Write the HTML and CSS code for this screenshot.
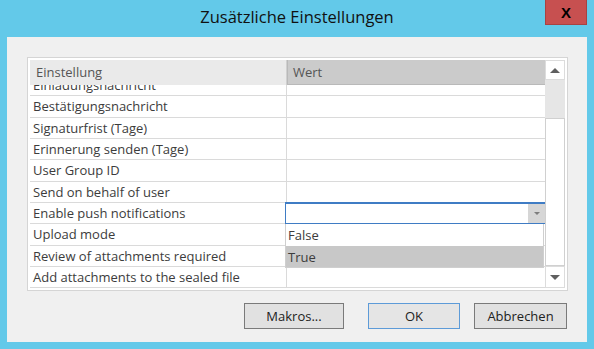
FILE: index.html
```html
<!DOCTYPE html>
<html lang="de">
<head>
<meta charset="UTF-8" />
<title>Zusätzliche Einstellungen</title>
<link rel="stylesheet" href="styles.css">
</head>
<body>

<div class="window">
  <div class="titlebar">
    <span class="title">Zusätzliche Einstellungen</span>
    <button class="close">X</button>
  </div>

  <div class="client">
    <div class="grid">
      <div class="table">
        <div class="head">
          <div class="hcell name">Einstellung</div>
          <div class="hcell value">Wert</div>
        </div>
        <div class="body">
          <div class="row first"><div class="cell name">Einladungsnachricht</div><div class="cell value"></div></div>
          <div class="row"><div class="cell name">Bestätigungsnachricht</div><div class="cell value"></div></div>
          <div class="row"><div class="cell name">Signaturfrist (Tage)</div><div class="cell value"></div></div>
          <div class="row"><div class="cell name">Erinnerung senden (Tage)</div><div class="cell value"></div></div>
          <div class="row"><div class="cell name">User Group ID</div><div class="cell value"></div></div>
          <div class="row"><div class="cell name">Send on behalf of user</div><div class="cell value"></div></div>
          <div class="row">
            <div class="cell name">Enable push notifications</div>
            <div class="cell value">
              <div class="combo"><span class="combo-arrow"></span></div>
              <ul class="dropdown">
                <li>False</li>
                <li class="selected">True</li>
              </ul>
            </div>
          </div>
          <div class="row"><div class="cell name">Upload mode</div><div class="cell value"></div></div>
          <div class="row"><div class="cell name">Review of attachments required</div><div class="cell value"></div></div>
          <div class="row"><div class="cell name">Add attachments to the sealed file</div><div class="cell value"></div></div>
          <div class="row"><div class="cell name">Sealed file name</div><div class="cell value"></div></div>
        </div>
      </div>
      <div class="scrollbar">
        <div class="sb-btn up"><span class="tri-up"></span></div>
        <div class="sb-track"></div>
        <div class="sb-thumb"></div>
        <div class="sb-btn down"><span class="tri-down"></span></div>
      </div>
    </div>

    <div class="buttons">
      <button class="btn macros">Makros...</button>
      <button class="btn default">OK</button>
      <button class="btn">Abbrechen</button>
    </div>
  </div>
</div>

</body>
</html>
```

FILE: styles.css
```css
body {
  margin: 0;
  background: #63c9e9;
  font-family: "Open Sans", "Liberation Sans", sans-serif;
}
.window {
  width: 594px;
  height: 349px;
}
.titlebar {
  position: relative;
  height: 37px;
  text-align: center;
}
.title {
  display: inline-block;
  padding-top: 6px;
  font-size: 16.5px;
  line-height: 22px;
  color: #111;
}
.close {
  position: absolute;
  top: 0;
  right: 7px;
  width: 42px;
  height: 25px;
  padding: 0;
  border: 1px solid #a84242;
  border-top: none;
  background: #c75050;
  color: #000;
  font-family: "Liberation Sans", sans-serif;
  font-size: 15px;
  font-weight: bold;
}

.client {
  margin: 0 7px;
  height: 305px;
  box-sizing: border-box;
  background: #f0f0f0;
  padding: 20px 0 0 20px;
}

/* property grid */
.grid {
  display: flex;
  width: 541px;
  height: 234px;
  box-sizing: border-box;
  border: 1px solid #d5d5d5;
  padding: 2px;
  background: #fff;
}
.table {
  width: 515px;
  display: flex;
  flex-direction: column;
  font-size: 13px;
  color: #3c3c3c;
}
.head {
  display: flex;
  height: 25px;
  flex-shrink: 0;
}
.hcell {
  box-sizing: border-box;
  line-height: 24px;
  color: #555;
}
.hcell.name {
  width: 257px;
  padding-left: 6px;
  background: #eaeaea;
  border-right: 1px solid #d0d0d0;
}
.hcell.value {
  width: 258px;
  padding-left: 5px;
  background: #cbcbcb;
  border-left: 1px solid #b9b9b9;
  border-bottom: 1px solid #b9b9b9;
}
.body {
  flex: 1;
  overflow: hidden;
}
.row {
  display: flex;
  height: 21.33px;
  box-sizing: border-box;
  border-bottom: 1px solid #dadada;
}
.row.first {
  margin-top: -10px;
}
.cell {
  box-sizing: border-box;
  line-height: 20px;
  white-space: nowrap;
}
.cell.name {
  width: 257px;
  padding-left: 3px;
  border-right: 1px solid #dadada;
}
.cell.value {
  width: 258px;
  position: relative;
}

/* open combobox in the value column */
.combo {
  position: absolute;
  top: -1px;
  left: -2px;
  right: -1px;
  height: 22px;
  box-sizing: border-box;
  border: 1px solid #3f7cc4;
  border-width: 2px 1px 1px 1px;
  background: #fff;
  display: flex;
  justify-content: flex-end;
}
.combo-arrow {
  width: 17px;
  background: #d6d6d6;
  display: flex;
  align-items: center;
  justify-content: center;
}
.combo-arrow::after {
  content: "";
  border-left: 3px solid transparent;
  border-right: 3px solid transparent;
  border-top: 3px solid #7d7d7d;
}
.dropdown {
  position: absolute;
  top: 21px;
  left: -2px;
  width: 259px;
  margin: 0;
  padding: 0;
  list-style: none;
  background: #fff;
  border: 1px solid #cfcfcf;
  border-top: none;
  box-sizing: border-box;
  z-index: 2;
}
.dropdown li {
  height: 22px;
  line-height: 22px;
  padding-left: 2px;
}
.dropdown li.selected {
  height: 21px;
  background: #c8c8c8;
}

/* vertical scrollbar */
.scrollbar {
  width: 20px;
  display: flex;
  flex-direction: column;
}
.sb-btn {
  box-sizing: border-box;
  border: 1px solid #dcdcdc;
  background: #fff;
  display: flex;
  align-items: center;
  justify-content: center;
}
.sb-btn.up {
  height: 20px;
}
.sb-btn.down {
  height: 22px;
}
.sb-track {
  height: 38px;
  background: #e6e6e6;
}
.sb-thumb {
  flex: 1;
  box-sizing: border-box;
  border: 1px solid #d0d0d0;
  background: #fff;
}
.tri-up {
  border-left: 5px solid transparent;
  border-right: 5px solid transparent;
  border-bottom: 5px solid #5f5f5f;
}
.tri-down {
  border-left: 5px solid transparent;
  border-right: 5px solid transparent;
  border-top: 5px solid #5f5f5f;
}

/* dialog buttons */
.buttons {
  display: flex;
  justify-content: flex-end;
  gap: 14px;
  width: 540px;
  margin-top: 12px;
}
.btn {
  height: 26px;
  width: 93px;
  padding: 0;
  border: 1px solid #7a7a7a;
  background: #e1e1e1;
  color: #222;
  font-family: "Open Sans", "Liberation Sans", sans-serif;
  font-size: 13px;
}
.btn.macros {
  width: 100px;
  margin-right: 10px;
}
.btn.default {
  width: 92px;
  border-color: #5d9bd8;
  background: #e5e5e5;
}
```
